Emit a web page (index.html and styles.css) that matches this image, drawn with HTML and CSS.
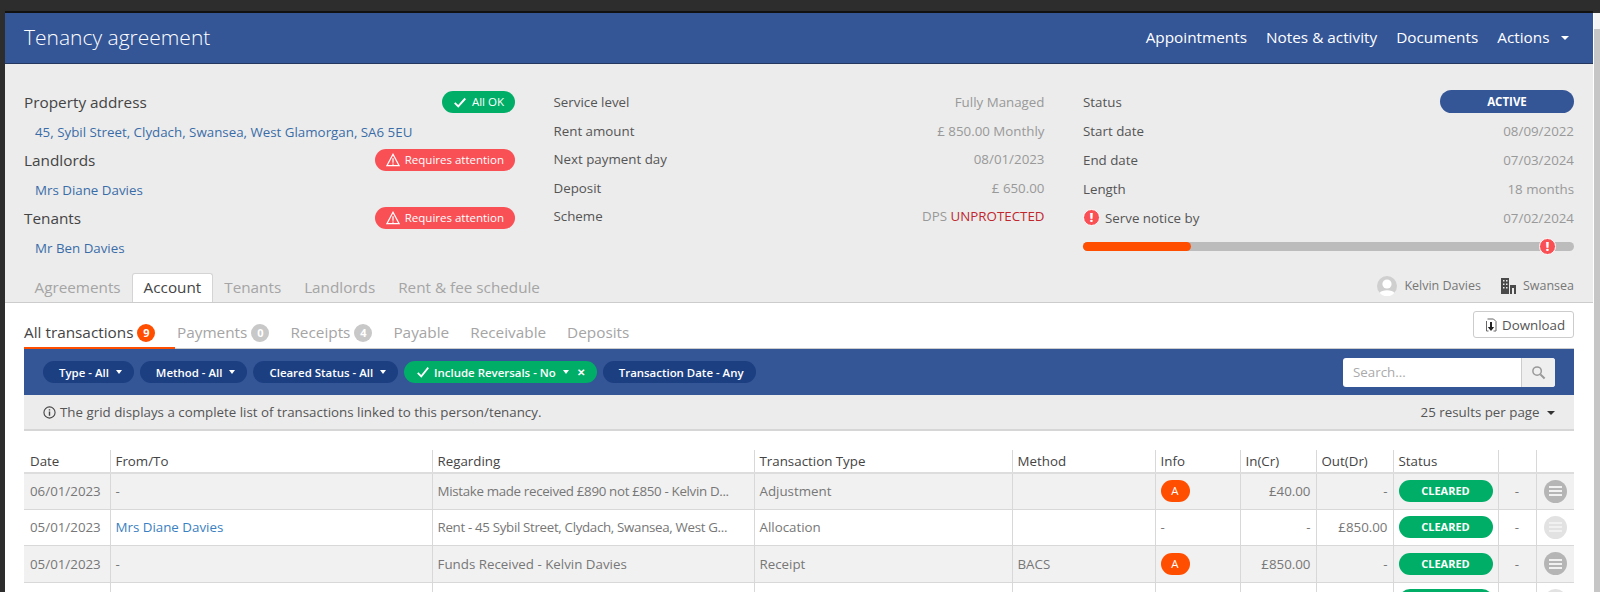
FILE: index.html
```html
<!DOCTYPE html>
<html lang="en">
<head>
    <meta charset="UTF-8">
    <title>Tenancy agreement</title>
    <link rel="stylesheet" href="styles.css">
</head>
<body>
    <div class="window">
        <div class="page">
            <header class="page-header">
                <h1>Tenancy agreement</h1>
                <nav class="header-nav">
                    <a>Appointments</a>
                    <a>Notes &amp; activity</a>
                    <a>Documents</a>
                    <a>Actions <span class="caret caret-nav"></span></a>
                </nav>
            </header>

            <section class="summary">
                <div class="summary-col">
                    <div class="summary-row">
                        <span class="heading">Property address</span>
                        <span class="flag flag-ok">
                            <svg class="flag-icon" viewBox="0 0 16 16"><path d="M2 9l4 4 8-9" fill="none" stroke="#fff" stroke-width="2.2"/></svg>
                            All OK
                        </span>
                    </div>
                    <div class="summary-row"><a class="sub-link">45, Sybil Street, Clydach, Swansea, West Glamorgan, SA6 5EU</a></div>
                    <div class="summary-row">
                        <span class="heading">Landlords</span>
                        <span class="flag flag-bad">
                            <svg class="flag-icon" viewBox="0 0 16 16"><path d="M8 1.5L15 14.5H1z" fill="none" stroke="#fff" stroke-width="1.4"/><path d="M8 6v5M8 12v1.5" stroke="#fff" stroke-width="1.4"/></svg>
                            Requires attention
                        </span>
                    </div>
                    <div class="summary-row"><a class="sub-link">Mrs Diane Davies</a></div>
                    <div class="summary-row">
                        <span class="heading">Tenants</span>
                        <span class="flag flag-bad">
                            <svg class="flag-icon" viewBox="0 0 16 16"><path d="M8 1.5L15 14.5H1z" fill="none" stroke="#fff" stroke-width="1.4"/><path d="M8 6v5M8 12v1.5" stroke="#fff" stroke-width="1.4"/></svg>
                            Requires attention
                        </span>
                    </div>
                    <div class="summary-row"><a class="sub-link">Mr Ben Davies</a></div>
                </div>

                <div class="summary-col summary-tight">
                    <div class="summary-row"><span>Service level</span><span class="value">Fully Managed</span></div>
                    <div class="summary-row"><span>Rent amount</span><span class="value">£ 850.00 Monthly</span></div>
                    <div class="summary-row"><span>Next payment day</span><span class="value">08/01/2023</span></div>
                    <div class="summary-row"><span>Deposit</span><span class="value">£ 650.00</span></div>
                    <div class="summary-row"><span>Scheme</span><span class="value">DPS <span class="danger">UNPROTECTED</span></span></div>
                </div>

                <div class="summary-col">
                    <div class="summary-row"><span>Status</span><span class="status-pill">ACTIVE</span></div>
                    <div class="summary-row"><span>Start date</span><span class="value">08/09/2022</span></div>
                    <div class="summary-row"><span>End date</span><span class="value">07/03/2024</span></div>
                    <div class="summary-row"><span>Length</span><span class="value">18 months</span></div>
                    <div class="summary-row">
                        <span class="notice"><span class="alert-dot">!</span>Serve notice by</span>
                        <span class="value">07/02/2024</span>
                    </div>
                    <div class="progress">
                        <div class="progress-fill"></div>
                        <span class="alert-dot progress-marker">!</span>
                    </div>
                </div>
            </section>

            <div class="main-tabs">
                <nav class="tab-list">
                    <a>Agreements</a>
                    <a class="active">Account</a>
                    <a>Tenants</a>
                    <a>Landlords</a>
                    <a>Rent &amp; fee schedule</a>
                </nav>
                <div class="owner">
                    <svg class="avatar" viewBox="0 0 20 20">
                        <circle cx="10" cy="10" r="10" fill="#cfcfcf"/>
                        <circle cx="10" cy="8" r="4.6" fill="#fff"/>
                        <path d="M2.5 17c2-3.6 13-3.6 15 0a10 10 0 0 1-15 0z" fill="#fff"/>
                    </svg>
                    <span>Kelvin Davies</span>
                    <svg class="office" viewBox="0 0 16 16">
                        <path d="M1 0h8v16H1z" fill="#4a4a4a"/>
                        <path d="M10 7h6v9h-6z" fill="#4a4a4a"/>
                        <path d="M3 2h1.5v1.5H3zM6 2h1.5v1.5H6zM3 5.5h1.5V7H3zM6 5.5h1.5V7H6zM3 9h1.5v1.5H3zM6 9h1.5v1.5H6zM12 10h2v6h-2z" fill="#ececec"/>
                    </svg>
                    <span>Swansea</span>
                </div>
            </div>

            <section class="content">
                <div class="sub-tabs">
                    <a class="active">All transactions <span class="count count-hot">9</span></a>
                    <a>Payments <span class="count">0</span></a>
                    <a>Receipts <span class="count">4</span></a>
                    <a>Payable</a>
                    <a>Receivable</a>
                    <a>Deposits</a>
                    <button class="download-btn">
                        <svg class="download-icon" viewBox="0 0 14 14">
                            <path d="M3.5 1h6l2.5 2.5V13H9.5M4.5 13H2.5V3" fill="none" stroke="#666" stroke-width="1"/>
                            <path d="M7 4v6" stroke="#222" stroke-width="2"/>
                            <path d="M3.8 9h6.4L7 13z" fill="#222"/>
                        </svg>
                        Download
                    </button>
                </div>

                <div class="filter-bar">
                    <span class="filter"><span>Type - All</span><span class="caret"></span></span>
                    <span class="filter"><span>Method - All</span><span class="caret"></span></span>
                    <span class="filter"><span>Cleared Status - All</span><span class="caret"></span></span>
                    <span class="filter filter-on">
                        <svg class="filter-check" viewBox="0 0 16 16"><path d="M2 9l4 4 8-10" fill="none" stroke="#fff" stroke-width="2"/></svg>
                        <span>Include Reversals - No</span><span class="caret"></span>
                        <span class="filter-x">✕</span>
                    </span>
                    <span class="filter"><span>Transaction Date - Any</span></span>
                    <div class="search">
                        <span class="search-input">Search...</span>
                        <span class="search-btn">
                            <svg viewBox="0 0 16 16" width="15" height="15"><circle cx="6.5" cy="6.5" r="4.5" fill="none" stroke="#999" stroke-width="1.6"/><path d="M10 10l4.5 4.5" stroke="#999" stroke-width="2.2"/></svg>
                        </span>
                    </div>
                </div>

                <div class="grid-info">
                    <span class="grid-note">
                        <svg class="info-icon" viewBox="0 0 14 14"><circle cx="7" cy="7" r="6" fill="none" stroke="#444" stroke-width="1.2"/><path d="M7 6v4.5M7 3.4v1.5" stroke="#444" stroke-width="1.5"/></svg>
                        The grid displays a complete list of transactions linked to this person/tenancy.
                    </span>
                    <span class="per-page">25 results per page <span class="caret caret-dark"></span></span>
                </div>

                <table class="grid">
                    <colgroup>
                        <col class="col-date"><col class="col-from"><col class="col-reg"><col class="col-type"><col class="col-method">
                        <col class="col-info"><col class="col-in"><col class="col-out"><col class="col-status"><col class="col-dash"><col class="col-menu">
                    </colgroup>
                    <thead>
                        <tr>
                            <th>Date</th><th>From/To</th><th>Regarding</th><th>Transaction Type</th><th>Method</th>
                            <th>Info</th><th>In(Cr)</th><th>Out(Dr)</th><th>Status</th><th></th><th></th>
                        </tr>
                    </thead>
                    <tbody>
                        <tr class="odd">
                            <td>06/01/2023</td><td>-</td><td class="clip">Mistake made received £890 not £850 - Kelvin D...</td><td>Adjustment</td><td></td>
                            <td><span class="info-tag">A</span></td><td class="num">£40.00</td><td class="num">-</td>
                            <td><span class="cleared">CLEARED</span></td><td class="mid">-</td><td class="mid"><span class="row-menu"><i></i><i></i><i></i></span></td>
                        </tr>
                        <tr>
                            <td>05/01/2023</td><td><a class="grid-link">Mrs Diane Davies</a></td><td class="clip">Rent - 45 Sybil Street, Clydach, Swansea, West G...</td><td>Allocation</td><td></td>
                            <td>-</td><td class="num">-</td><td class="num">£850.00</td>
                            <td><span class="cleared">CLEARED</span></td><td class="mid">-</td><td class="mid"><span class="row-menu faded"><i></i><i></i><i></i></span></td>
                        </tr>
                        <tr class="odd tall">
                            <td>05/01/2023</td><td>-</td><td>Funds Received - Kelvin Davies</td><td>Receipt</td><td>BACS</td>
                            <td><span class="info-tag">A</span></td><td class="num">£850.00</td><td class="num">-</td>
                            <td><span class="cleared">CLEARED</span></td><td class="mid">-</td><td class="mid"><span class="row-menu"><i></i><i></i><i></i></span></td>
                        </tr>
                        <tr>
                            <td></td><td></td><td></td><td></td><td></td>
                            <td></td><td></td><td></td>
                            <td><span class="cleared"></span></td><td></td><td class="mid"><span class="row-menu faded"><i></i><i></i><i></i></span></td>
                        </tr>
                    </tbody>
                </table>
            </section>
        </div>
        <div class="scrollbar"></div>
    </div>
</body>
</html>
```

FILE: styles.css
```css
* {
    margin: 0;
    padding: 0;
    box-sizing: border-box;
}

body {
    font-family: "Open Sans", sans-serif;
    font-size: 13.33px;
    color: #555;
    background: #2d2d2d;
    overflow: hidden;
}

a {
    text-decoration: none;
}

.window {
    display: flex;
    height: 592px;
    padding: 11px 0 0 5px;
    overflow: hidden;
}

.page {
    flex: 1;
    min-width: 0;
    background: #fff;
    border-top: 2px solid #111;
}

.scrollbar {
    width: 7px;
    margin-top: 2px;
    background: linear-gradient(#f4f4f4 0, #f4f4f4 16px, #c6c6c6 16px);
    border-left: 1px solid #fff;
}

/* header */
.page-header {
    display: flex;
    align-items: center;
    justify-content: space-between;
    height: 51px;
    padding: 0 19px;
    background: #345596;
    border-bottom: 1px solid #24385f;
    color: #fff;
}

.page-header h1 {
    font-size: 21px;
    font-weight: 300;
    margin-top: -3px;
}

.header-nav {
    display: flex;
    gap: 19px;
    font-size: 15.33px;
    margin-top: -3px;
    padding-right: 5.5px;
}

.caret {
    display: inline-block;
    width: 0;
    height: 0;
    margin-left: 3px;
    vertical-align: middle;
    border-left: 4px solid transparent;
    border-right: 4px solid transparent;
    border-top: 4px solid #fff;
}

.caret-nav {
    margin-left: 7px;
}

.caret-dark {
    border-top-color: #333;
    margin-left: 4px;
}

/* summary */
.summary {
    display: grid;
    grid-template-columns: repeat(3, 1fr);
    gap: 38.5px;
    height: 210px;
    padding: 23px 19px 0;
    background: #ececec;
}

.summary-row {
    display: flex;
    align-items: center;
    justify-content: space-between;
    height: 29px;
}

.summary-tight {
    padding-top: 1px;
}

.summary-tight .summary-row {
    height: 28.5px;
}

.heading {
    font-size: 15.33px;
    color: #444;
}

.sub-link {
    margin-top: 2px;
    padding-left: 11px;
    color: #3a6ca8;
}

.value {
    color: #999;
}

.danger {
    color: #c0272d;
}

.flag {
    display: flex;
    align-items: center;
    height: 22px;
    padding: 0 11px;
    border-radius: 11px;
    color: #fff;
    font-size: 11.5px;
}

.flag-ok {
    background: #00ae68;
}

.flag-bad {
    background: #f95056;
}

.flag-icon {
    width: 14px;
    height: 14px;
    margin-right: 5px;
}

.status-pill {
    width: 134px;
    height: 23px;
    line-height: 23px;
    border-radius: 12px;
    text-align: center;
    background: #345596;
    color: #fff;
    font-size: 11.5px;
    font-weight: 700;
}

.notice {
    display: flex;
    align-items: center;
}

.alert-dot {
    display: inline-block;
    width: 17px;
    height: 17px;
    line-height: 15px;
    margin-right: 5px;
    border-radius: 50%;
    border: 1px solid #fff;
    background: #f95056;
    color: #fff;
    font-size: 12px;
    font-weight: 800;
    text-align: center;
}

.progress {
    position: relative;
    height: 9px;
    margin-top: 10px;
    background: #bcbcbc;
    border-radius: 5px;
}

.progress-fill {
    width: 22%;
    height: 100%;
    background: #ff4e00;
    border-radius: 5px;
}

.progress-marker {
    position: absolute;
    top: -4px;
    right: 18px;
    margin: 0;
}

/* tabs */
.main-tabs {
    display: flex;
    align-items: flex-end;
    justify-content: space-between;
    height: 29px;
    padding: 0 19px;
    background: #ececec;
    border-bottom: 1px solid #ccc;
}

.tab-list {
    display: flex;
    font-size: 15.27px;
    margin-left: -1px;
}

.tab-list a {
    height: 29px;
    line-height: 27px;
    padding: 0 10.5px;
    color: #a5a5a5;
    border: 1px solid transparent;
    border-bottom: none;
}

.tab-list a.active {
    background: #fff;
    color: #444;
    border-color: #d4d4d4;
    border-radius: 3px 3px 0 0;
    margin-bottom: -1px;
}

.owner {
    display: flex;
    align-items: center;
    height: 29px;
    font-size: 12.5px;
    color: #777;
    margin-bottom: 2px;
}

.avatar {
    width: 20px;
    height: 20px;
    margin-right: 7px;
}

.office {
    width: 16px;
    height: 16px;
    margin: 0 7px 0 19px;
}

/* content */
.content {
    padding: 0 19px;
}

.sub-tabs {
    display: flex;
    align-items: center;
    gap: 21px;
    height: 46px;
    font-size: 15.33px;
    color: #a5a5a5;
    border-bottom: 1px solid #ccc;
}

.sub-tabs a {
    height: 46px;
    line-height: 58px;
}

.sub-tabs a.active {
    color: #444;
    width: 151px;
    margin-right: -19px;
    border-bottom: 2px solid #ff4e00;
}

.count {
    display: inline-block;
    width: 18px;
    height: 18px;
    line-height: 18px;
    border-radius: 50%;
    background: #c8c8c8;
    color: #fff;
    font-size: 11px;
    font-weight: 700;
    text-align: center;
    vertical-align: 1px;
}

.count-hot {
    background: #ff4e00;
}

.download-btn {
    display: flex;
    align-items: center;
    height: 27px;
    width: 101px;
    margin-left: auto;
    margin-top: -2px;
    padding-left: 10px;
    background: #fff;
    border: 1px solid #ccc;
    border-radius: 3px;
    font-family: inherit;
    font-size: 13.33px;
    color: #555;
}

.download-icon {
    width: 14px;
    height: 14px;
    margin-right: 4px;
}

.filter-bar {
    display: flex;
    align-items: center;
    gap: 6px;
    height: 46px;
    padding: 0 19px;
    background: #345596;
}

.filter {
    display: flex;
    align-items: center;
    height: 22px;
    padding: 0 12px 0 16px;
    border-radius: 11px;
    background: #1c3f82;
    color: #fff;
    font-size: 11.45px;
    font-weight: 600;
    white-space: nowrap;
}

.filter .caret {
    border-width: 4px 3.5px 0;
    margin-left: 7px;
}

.filter-on {
    background: #00ae68;
    padding-left: 12px;
}

.filter-check {
    width: 14px;
    height: 14px;
    margin-right: 4px;
}

.filter-x {
    margin-left: 8px;
    font-size: 10px;
    font-weight: 800;
}

.search {
    display: flex;
    width: 212px;
    height: 29px;
    margin-left: auto;
    background: #fff;
    border-radius: 3px;
    overflow: hidden;
}

.search-input {
    flex: 1;
    padding-left: 10px;
    line-height: 29px;
    color: #aaa;
}

.search-btn {
    display: flex;
    align-items: center;
    justify-content: center;
    width: 34px;
    background: #efefef;
    border-left: 1px solid #ccc;
}

.grid-info {
    display: flex;
    align-items: center;
    justify-content: space-between;
    height: 36px;
    padding: 0 19px;
    background: #ececec;
    border-bottom: 2px solid #d6d6d6;
    color: #555;
}

.grid-note {
    display: flex;
    align-items: center;
}

.info-icon {
    width: 13px;
    height: 13px;
    margin-right: 4px;
}

.grid {
    width: 100%;
    margin-top: 19px;
    table-layout: fixed;
    border-collapse: collapse;
}

.col-date { width: 86px; }
.col-from { width: 322px; }
.col-reg { width: 322px; }
.col-type { width: 258px; }
.col-method { width: 143px; }
.col-info { width: 85px; }
.col-in { width: 76px; }
.col-out { width: 77px; }
.col-status { width: 105px; }
.col-dash { width: 38px; }
.col-menu { width: 38px; }

.grid th {
    height: 23px;
    padding: 0 5px;
    font-weight: 400;
    text-align: left;
    color: #444;
    border-left: 1px solid #d8d8d8;
    border-bottom: 2px solid #ddd;
}

.grid td {
    height: 36px;
    padding: 0 5px;
    color: #777;
    border-left: 1px solid #d8d8d8;
    border-bottom: 1px solid #d8d8d8;
    white-space: nowrap;
}

.grid th:first-child,
.grid td:first-child {
    border-left: none;
    padding-left: 6px;
}

.grid td.clip {
    letter-spacing: -0.33px;
}

.grid tr.odd td {
    background: #f1f1f1;
}

.grid tr.tall td {
    height: 37px;
}

.grid td.num {
    text-align: right;
}

.grid td.mid {
    text-align: center;
    padding: 0;
}

.grid-link {
    color: #3a7fc1;
}

.info-tag {
    display: inline-block;
    width: 29px;
    height: 22px;
    line-height: 22px;
    border-radius: 11px;
    background: #ff4e00;
    color: #fff;
    font-size: 11.5px;
    text-align: center;
    vertical-align: middle;
}

.cleared {
    display: block;
    height: 22px;
    line-height: 21px;
    border-radius: 11px;
    background: #00ae68;
    color: #fff;
    font-size: 11px;
    font-weight: 700;
    text-align: center;
}

.row-menu {
    display: inline-flex;
    flex-direction: column;
    align-items: center;
    justify-content: center;
    gap: 2px;
    width: 23px;
    height: 23px;
    border-radius: 50%;
    background: #b5b5b5;
    vertical-align: middle;
}

.row-menu i {
    display: block;
    width: 13px;
    height: 2px;
    background: #f1f1f1;
}

.row-menu.faded {
    background: #e2e2e2;
}
```
